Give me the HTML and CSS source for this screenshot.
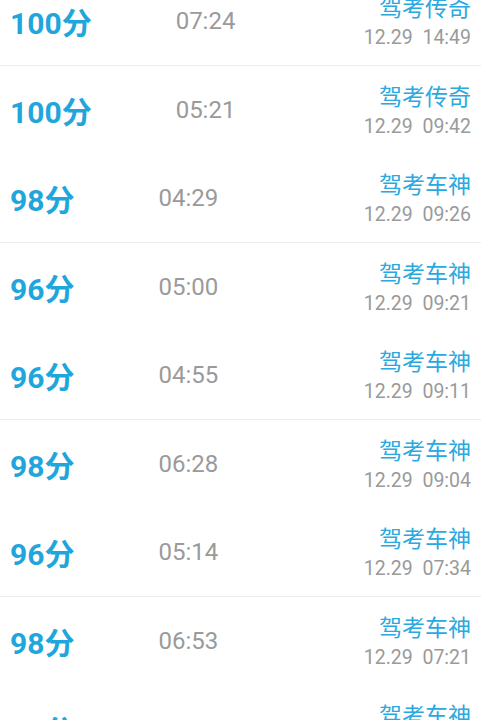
FILE: index.html
```html
<!DOCTYPE html>
<html lang="zh-CN">
<head>
  <meta charset="UTF-8" />
  <title>考试记录</title>
  <link rel="stylesheet" href="styles.css">
</head>
<body>

  <ul class="lista">
    <li class="fila linea">
      <span class="nota">100分</span>
      <span class="tiempo">07:24</span>
      <div class="info">
        <div class="titulo">驾考传奇</div>
        <div class="fecha">12.29  14:49</div>
      </div>
    </li>
    <li class="fila">
      <span class="nota">100分</span>
      <span class="tiempo">05:21</span>
      <div class="info">
        <div class="titulo">驾考传奇</div>
        <div class="fecha">12.29  09:42</div>
      </div>
    </li>
    <li class="fila linea">
      <span class="nota">98分</span>
      <span class="tiempo">04:29</span>
      <div class="info">
        <div class="titulo">驾考车神</div>
        <div class="fecha">12.29  09:26</div>
      </div>
    </li>
    <li class="fila">
      <span class="nota">96分</span>
      <span class="tiempo">05:00</span>
      <div class="info">
        <div class="titulo">驾考车神</div>
        <div class="fecha">12.29  09:21</div>
      </div>
    </li>
    <li class="fila linea">
      <span class="nota">96分</span>
      <span class="tiempo">04:55</span>
      <div class="info">
        <div class="titulo">驾考车神</div>
        <div class="fecha">12.29  09:11</div>
      </div>
    </li>
    <li class="fila">
      <span class="nota">98分</span>
      <span class="tiempo">06:28</span>
      <div class="info">
        <div class="titulo">驾考车神</div>
        <div class="fecha">12.29  09:04</div>
      </div>
    </li>
    <li class="fila linea">
      <span class="nota">96分</span>
      <span class="tiempo">05:14</span>
      <div class="info">
        <div class="titulo">驾考车神</div>
        <div class="fecha">12.29  07:34</div>
      </div>
    </li>
    <li class="fila">
      <span class="nota">98分</span>
      <span class="tiempo">06:53</span>
      <div class="info">
        <div class="titulo">驾考车神</div>
        <div class="fecha">12.29  07:21</div>
      </div>
    </li>
    <li class="fila linea">
      <span class="nota">96分</span>
      <span class="tiempo">05:08</span>
      <div class="info">
        <div class="titulo">驾考车神</div>
        <div class="fecha">12.29  07:10</div>
      </div>
    </li>
  </ul>

</body>
</html>
```

FILE: styles.css
```css
body {
  margin: 0;
  background-color: #fff;
  font-family: Roboto, "Noto Sans CJK SC", sans-serif;
  overflow: hidden;
}

.lista {
  list-style: none;
  margin: -22.5px 0 0 0;
  padding: 0;
}

.fila {
  display: flex;
  align-items: center;
  box-sizing: border-box;
  height: 88.5px;
  padding: 0 10px;
}

.linea {
  border-bottom: 1.5px solid #ececec;
}

.nota {
  color: #1fa6dc;
  font-size: 30px;
  font-weight: bold;
}

.tiempo {
  margin-left: 84px;
  color: #9a9a9a;
  font-size: 24px;
}

.info {
  margin-left: auto;
  text-align: right;
}

.titulo {
  color: #2aa9e0;
  font-size: 23px;
  line-height: 30px;
}

.fecha {
  margin-top: 3px;
  color: #9a9a9a;
  font-size: 19.5px;
  line-height: 22px;
  white-space: pre;
}
```
